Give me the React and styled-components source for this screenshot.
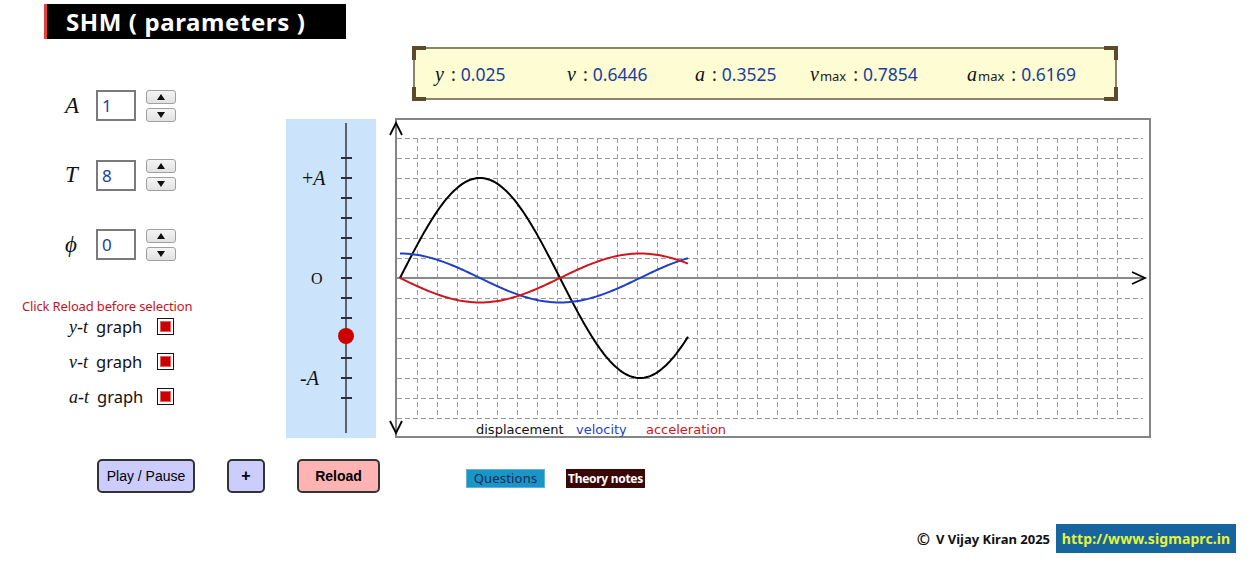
import React from "react";
import styled, { createGlobalStyle } from "styled-components";

const GlobalStyle = createGlobalStyle`
  html, body { margin: 0; padding: 0; background: #ffffff; }
  body { font-family: "Noto Sans", "DejaVu Sans", sans-serif; }
`;

const Page = styled.div`
  width: 1260px;
  height: 566px;
  display: flex;
  flex-direction: column;
  overflow: hidden;
`;

const Header = styled.header`
  padding: 4px 0 0 44px;
`;

const Title = styled.h1`
  margin: 0;
  box-sizing: border-box;
  width: 302px;
  height: 35px;
  background: #000;
  border-left: 3px solid #e5403a;
  color: #fff;
  font: 700 24px/35px "Noto Sans", sans-serif;
  letter-spacing: 0.6px;
  padding-left: 19px;
  white-space: nowrap;
`;

const Main = styled.div`
  display: flex;
  margin-top: 8px;
`;

const LeftPanel = styled.div`
  width: 286px;
  padding-top: 43px;
  display: flex;
  flex-direction: column;
`;

const Params = styled.div`
  display: flex;
  flex-direction: column;
  gap: 38.5px;
`;

const ParamRow = styled.div`
  display: flex;
  align-items: center;
  height: 31px;
  padding-left: 65px;
`;

const MathLabel = styled.span`
  font-family: "Liberation Serif", "DejaVu Serif", serif;
  font-style: italic;
  font-size: ${(p) => p.$size || 23}px;
  color: #111;
  width: ${(p) => (p.$width ? `${p.$width}px` : "auto")};
`;

const ValueBox = styled.div`
  box-sizing: border-box;
  width: 40px;
  height: 31px;
  border: 2px solid #7a7a7a;
  padding-left: 4px;
  color: #1b3e9a;
  font: 400 17px/27px "Noto Sans", sans-serif;
`;

const Spinner = styled.div`
  display: flex;
  flex-direction: column;
  gap: 4px;
  margin-left: 10px;
`;

const SpinButton = styled.button`
  box-sizing: border-box;
  width: 30px;
  height: 14px;
  padding: 0;
  border: 1px solid #a0a0a0;
  border-radius: 3px;
  background: linear-gradient(#f4f4f4, #e2e2e2);
  display: flex;
  align-items: center;
  justify-content: center;
`;

const Arrow = styled.span`
  width: 0;
  height: 0;
  border-left: 4px solid transparent;
  border-right: 4px solid transparent;
  ${(p) => (p.$down ? "border-top: 6px solid #111;" : "border-bottom: 6px solid #111;")}
`;

const Note = styled.div`
  margin-top: 39px;
  padding-left: 22px;
  color: #c4161c;
  font: 400 13px/14px "Noto Sans", sans-serif;
  letter-spacing: -0.15px;
`;

const GraphToggles = styled.div`
  display: flex;
  flex-direction: column;
  margin-top: -4px;
`;

const ToggleRow = styled.div`
  display: flex;
  align-items: center;
  height: 35px;
  padding-left: 69px;
`;

const ToggleText = styled.span`
  width: 88px;
  display: flex;
  align-items: baseline;
  gap: 8px;
  color: #111;
  font: 400 16.5px "Noto Sans", sans-serif;
`;

const Check = styled.span`
  box-sizing: border-box;
  width: 17px;
  height: 17px;
  border: 1.5px solid #151515;
  background: #fff;
  padding: 2px;
  display: flex;
`;

const CheckFill = styled.span`
  flex: 1;
  background: #cc0000;
  border: 1px solid #e26060;
`;

const RightCol = styled.div`
  display: flex;
  flex-direction: column;
`;

const InfoBox = styled.div`
  position: relative;
  box-sizing: border-box;
  margin-left: 127px;
  width: 704px;
  height: 53px;
  background: #fdfcd3;
  border: 2px solid #8d8468;
  display: grid;
  grid-template-columns: 132px 128px 115px 157px auto;
  align-items: center;
  padding-left: 20px;
`;

const Corner = styled.span`
  position: absolute;
  width: 10px;
  height: 10px;
  border-color: #5b4a2c;
  border-style: solid;
  border-width: 0;
  ${(p) => (p.$v === "top" ? "top: -3px; border-top-width: 4px;" : "bottom: -3px; border-bottom-width: 4px;")}
  ${(p) => (p.$h === "left" ? "left: -3px; border-left-width: 4px;" : "right: -3px; border-right-width: 4px;")}
`;

const Readout = styled.div`
  display: flex;
  align-items: baseline;
  white-space: nowrap;
`;

const Sub = styled.sub`
  font: 400 13px "Noto Sans", sans-serif;
  color: #222;
  vertical-align: -4px;
  margin-left: 1px;
`;

const Colon = styled.span`
  font: 400 18px "Noto Sans", sans-serif;
  color: #222;
  margin: 0 5px 0 7px;
`;

const Num = styled.span`
  font: 400 17.5px "Noto Sans", sans-serif;
  color: #1b3e9a;
`;

const ChartRow = styled.div`
  display: flex;
  align-items: flex-start;
  margin-top: 18px;
`;

const ScalePanel = styled.div`
  width: 90px;
  height: 319px;
  margin-top: 1px;
  background: #cce4fb;
`;

const GraphBox = styled.div`
  box-sizing: border-box;
  width: 756px;
  height: 320px;
  margin-left: 19px;
  border: 2px solid #858585;
  background: #fff;

  svg {
    display: block;
    overflow: visible;
  }
`;

const Controls = styled.div`
  display: flex;
  align-items: center;
  margin-top: 21px;
  padding-left: 97px;
  height: 34px;
`;

const ActionButton = styled.button`
  box-sizing: border-box;
  height: 34px;
  width: ${(p) => p.$w}px;
  margin-right: ${(p) => p.$gap || 0}px;
  background: ${(p) => p.$bg};
  border: 2px solid #333;
  border-radius: 5px;
  color: #000;
  font: ${(p) => (p.$bold ? 700 : 400)} ${(p) => p.$fs || 14}px "Liberation Sans", Arial, sans-serif;
  padding: 0;
`;

const LinkTag = styled.span`
  box-sizing: border-box;
  height: 19px;
  width: 79px;
  margin-top: 4px;
  margin-right: ${(p) => p.$gap || 0}px;
  background: ${(p) => p.$bg};
  color: ${(p) => p.$fg};
  border: 1px solid ${(p) => p.$bd};
  font: ${(p) => (p.$bold ? 700 : 400)} ${(p) => p.$fs}px/17px "Noto Sans", sans-serif;
  text-align: center;
  white-space: nowrap;
  letter-spacing: ${(p) => (p.$bold ? "-0.3px" : "0.2px")};
`;

const Footer = styled.footer`
  display: flex;
  justify-content: flex-end;
  align-items: center;
  margin-top: 31px;
  padding-right: 24px;
  gap: 6px;
`;

const Credit = styled.span`
  font: 700 13px "Noto Sans", sans-serif;
  color: #111;
  display: flex;
  align-items: center;
  gap: 6px;
`;

const CopyMark = styled.span`
  font-size: 16px;
`;

const SiteLink = styled.span`
  box-sizing: border-box;
  width: 180px;
  height: 29px;
  background: #17659f;
  color: #e7f23a;
  font: 700 14px/29px "Noto Sans", sans-serif;
  text-align: center;
  letter-spacing: 0.1px;
`;

function ScaleSvg() {
  const ticks = [];
  for (let k = 0; k <= 12; k++) ticks.push(39 + 20 * k);
  return (
    <svg width="90" height="319" viewBox="0 0 90 319">
      <line x1="60" y1="4" x2="60" y2="314" stroke="#5a6272" strokeWidth="2" />
      {ticks.map((y) => (
        <line key={y} x1="55" y1={y} x2="66" y2={y} stroke="#2a2f38" strokeWidth="2" />
      ))}
      <text x="16" y="66" fontFamily="Liberation Serif, serif" fontSize="20" fill="#111">
        +<tspan fontStyle="italic">A</tspan>
      </text>
      <text x="25" y="165" fontFamily="Liberation Serif, serif" fontSize="16" fill="#111">
        O
      </text>
      <text x="14" y="266" fontFamily="Liberation Serif, serif" fontSize="20" fill="#111">
        -<tspan fontStyle="italic">A</tspan>
      </text>
      <circle cx="60" cy="217" r="8" fill="#cc0000" />
    </svg>
  );
}

function curve(fn) {
  const pts = [];
  for (let x = 3; x <= 291; x += 2) {
    const ph = (2 * Math.PI * (x - 3)) / 320;
    pts.push(`${x},${fn(ph).toFixed(2)}`);
  }
  return pts.join(" ");
}

function GraphSvg() {
  const vLines = [];
  for (let k = 1; k <= 36; k++) vLines.push(20 * k);
  const hLines = [];
  for (let k = 0; k <= 14; k++) if (k !== 7) hLines.push(18 + 20 * k);
  return (
    <svg width="752" height="316" viewBox="0 0 752 316">
      <g stroke="#9a9a9a" strokeWidth="1" strokeDasharray="5 3">
        {vLines.map((x) => (
          <line key={"v" + x} x1={x + 0.5} y1="18" x2={x + 0.5} y2="298" />
        ))}
        {hLines.map((y) => (
          <line key={"h" + y} x1="0" y1={y + 0.5} x2="746" y2={y + 0.5} />
        ))}
      </g>
      <line x1="0" y1="158" x2="746" y2="158" stroke="#8a8a8a" strokeWidth="2" />
      <g stroke="#000" strokeWidth="1.8" fill="none">
        <polyline points="-7,15 -1,3 5,15" />
        <polyline points="-7,301 -1,313 5,301" />
        <polyline points="735,152 748,158 735,164" />
      </g>
      <polyline points={curve((p) => 158 - 100 * Math.sin(p))} fill="none" stroke="#000" strokeWidth="2" />
      <polyline points={curve((p) => 158 - 24.5 * Math.cos(p))} fill="none" stroke="#1f3fc4" strokeWidth="2" />
      <polyline points={curve((p) => 158 + 24.5 * Math.sin(p))} fill="none" stroke="#d0141e" strokeWidth="2" />
      <g fontFamily="DejaVu Sans, sans-serif" fontSize="13">
        <text x="79" y="314" fill="#111">displacement</text>
        <text x="179" y="314" fill="#1f3fc4">velocity</text>
        <text x="249" y="314" fill="#d0141e">acceleration</text>
      </g>
    </svg>
  );
}

const params = [
  { sym: "A", val: "1" },
  { sym: "T", val: "8" },
  { sym: "ϕ", val: "0" },
];

const toggles = ["y", "v", "a"];

export default function App() {
  return (
    <Page>
      <GlobalStyle />
      <Header>
        <Title>SHM ( parameters )</Title>
      </Header>
      <Main>
        <LeftPanel>
          <Params>
            {params.map((p) => (
              <ParamRow key={p.sym}>
                <MathLabel $width={31}>{p.sym}</MathLabel>
                <ValueBox>{p.val}</ValueBox>
                <Spinner>
                  <SpinButton>
                    <Arrow />
                  </SpinButton>
                  <SpinButton>
                    <Arrow $down />
                  </SpinButton>
                </Spinner>
              </ParamRow>
            ))}
          </Params>
          <Note>Click Reload before selection</Note>
          <GraphToggles>
            {toggles.map((t) => (
              <ToggleRow key={t}>
                <ToggleText>
                  <MathLabel $size={18}>{t}-t</MathLabel>
                  <span>graph</span>
                </ToggleText>
                <Check>
                  <CheckFill />
                </Check>
              </ToggleRow>
            ))}
          </GraphToggles>
        </LeftPanel>
        <RightCol>
          <InfoBox>
            <Corner $v="top" $h="left" />
            <Corner $v="top" $h="right" />
            <Corner $v="bottom" $h="left" />
            <Corner $v="bottom" $h="right" />
            <Readout>
              <MathLabel $size={20}>y</MathLabel>
              <Colon>:</Colon>
              <Num>0.025</Num>
            </Readout>
            <Readout>
              <MathLabel $size={20}>v</MathLabel>
              <Colon>:</Colon>
              <Num>0.6446</Num>
            </Readout>
            <Readout>
              <MathLabel $size={20}>a</MathLabel>
              <Colon>:</Colon>
              <Num>0.3525</Num>
            </Readout>
            <Readout>
              <MathLabel $size={20}>v</MathLabel>
              <Sub>max</Sub>
              <Colon>:</Colon>
              <Num>0.7854</Num>
            </Readout>
            <Readout>
              <MathLabel $size={20}>a</MathLabel>
              <Sub>max</Sub>
              <Colon>:</Colon>
              <Num>0.6169</Num>
            </Readout>
          </InfoBox>
          <ChartRow>
            <ScalePanel>
              <ScaleSvg />
            </ScalePanel>
            <GraphBox>
              <GraphSvg />
            </GraphBox>
          </ChartRow>
        </RightCol>
      </Main>
      <Controls>
        <ActionButton $w={98} $gap={32} $bg="#ccccff">Play / Pause</ActionButton>
        <ActionButton $w={38} $gap={32} $bg="#ccccff" $bold $fs={16}>+</ActionButton>
        <ActionButton $w={83} $gap={86} $bg="#ffb3b3" $bold>Reload</ActionButton>
        <LinkTag $gap={21} $fs={13} $bg="#1996c6" $fg="#0f2a55" $bd="#5fb4d8">Questions</LinkTag>
        <LinkTag $fs={12} $bg="#3b0606" $fg="#ffffff" $bd="#3b0606" $bold>Theory notes</LinkTag>
      </Controls>
      <Footer>
        <Credit>
          <CopyMark>©</CopyMark>
          <span>V Vijay Kiran 2025</span>
        </Credit>
        <SiteLink>http://www.sigmaprc.in</SiteLink>
      </Footer>
    </Page>
  );
}
